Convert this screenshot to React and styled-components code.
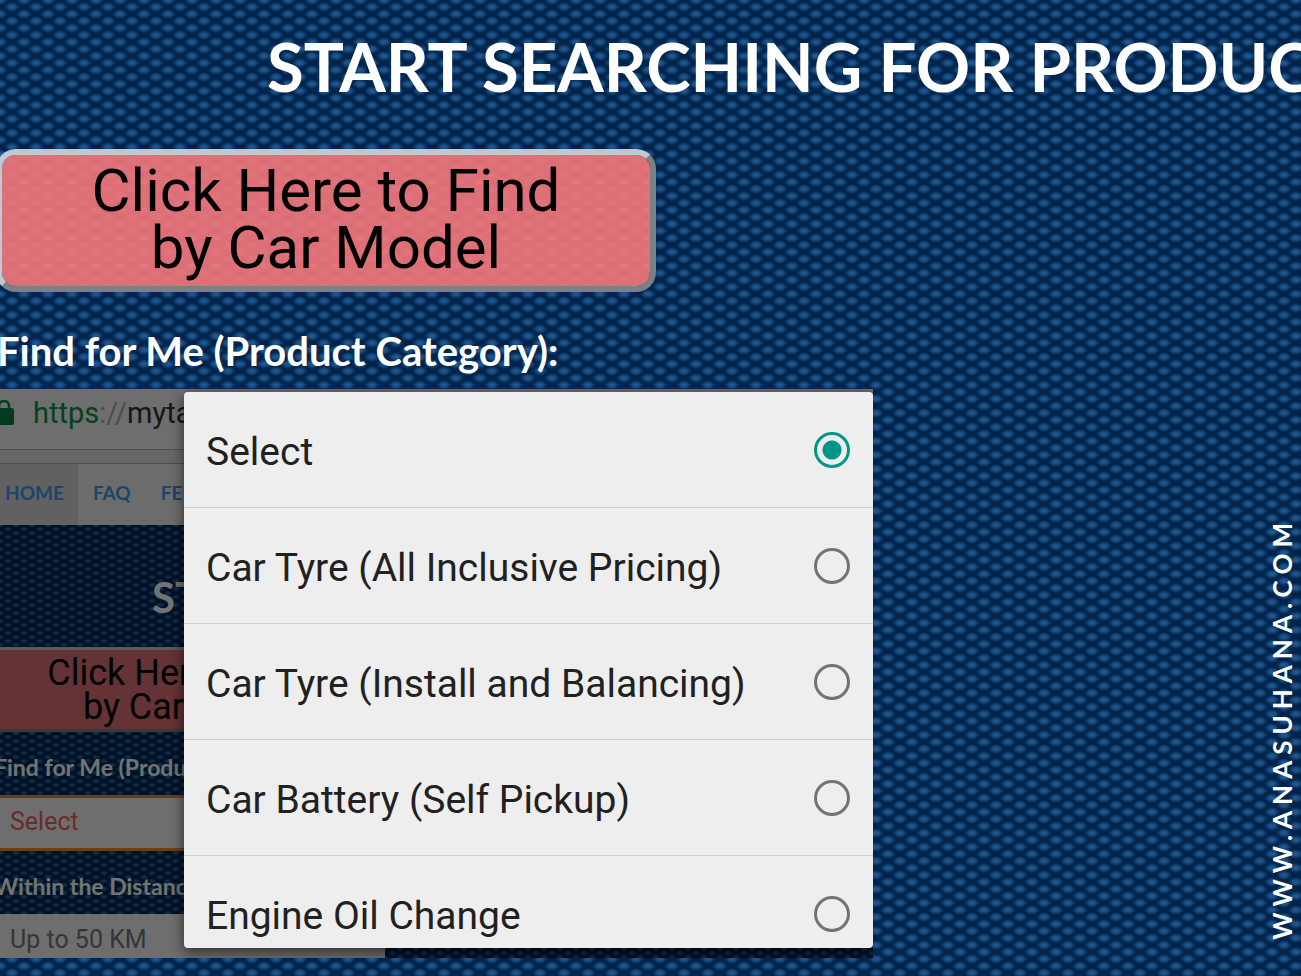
import styled, { createGlobalStyle, css } from 'styled-components';

const mesh = css`
  background-color: #02234a;
  --bump: radial-gradient(ellipse 8px 5px at 50% 50%, #225a90 0%, #1a4f85 40%, rgba(14, 66, 118, 0.75) 65%, transparent 100%);
  background-image: var(--bump), var(--bump);
`

const GlobalStyle = createGlobalStyle`
  *, *::before, *::after {
    box-sizing: border-box;
  }
  body {
    margin: 0;
    ${mesh}
    background-size: 24px 14px;
    background-position: 0 0, 12px 7px;
  }
`

const Page = styled.main`
  position: relative;
  overflow: hidden;
  padding: 20px 0 18px;
  color: #fff;
  font-family: Lato, sans-serif;
`

const Title = styled.h1`
  margin: 0;
  padding-left: ${({ $small }) => ($small ? '152px' : '267px')};
  font-size: ${({ $small }) => ($small ? '42px' : '67px')};
  line-height: ${({ $small }) => ($small ? '53px' : '92px')};
  font-weight: 700;
  white-space: nowrap;
`

const ModelButton = styled.button`
  display: block;
  width: ${({ $small }) => ($small ? '402px' : '660px')};
  margin: ${({ $small }) => ($small ? '23px 0 0 -13px' : '37px 0 0 -4px')};
  padding: ${({ $small }) => ($small ? '6px 0 5px' : '7px 0 10px')};
  border: ${({ $small }) => ($small ? '3px' : '6px')} solid;
  border-color: #c0c8d0 #7b8084 #7b8084 #c0c8d0;
  border-radius: ${({ $small }) => ($small ? '12px' : '20px')};
  background: rgba(248, 120, 123, 0.89);
  background-clip: padding-box;
  color: #000;
  font-family: Roboto, sans-serif;
  font-size: ${({ $small }) => ($small ? '36px' : '60px')};
  line-height: ${({ $small }) => ($small ? '34px' : '57px')};
`

const Label = styled.label`
  display: block;
  width: max-content;
  margin: 0 0 0 ${({ $small }) => ($small ? '-6px' : '-3px')};
  padding: ${({ $small }) => ($small ? '19px 0 11px' : '34px 0 13px')};
  font-size: ${({ $small }) => ($small ? '23px' : '40px')};
  line-height: ${({ $small }) => ($small ? '33px' : '50px')};
  font-weight: 700;
`

const Preview = styled.section`
  display: grid;
  width: calc(100% - 428px);
  height: 569px;
  overflow: hidden;

  > * {
    grid-area: 1 / 1;
  }
`

const Screen = styled.div`
  min-width: 0;
  ${mesh}
  --bump: radial-gradient(ellipse 5px 3px at 50% 50%, #2a6bab 0%, #1f5b98 40%, rgba(14, 70, 126, 0.75) 70%, transparent 100%);
  background-size: 16px 8px;
  background-position: 0 0, 8px 4px;
`

const AddressBar = styled.div`
  display: flex;
  gap: 19px;
  height: 61px;
  padding-bottom: 12px;
  align-items: center;
  border-bottom: 1px solid #b4b4b4;
  background: #f4f4f4;
  color: #333;
  font-family: Roboto, sans-serif;
  font-size: 29px;

  svg {
    margin-left: -6px;
  }
`

const Secure = styled.span`
  color: #0b9043;
`

const Slashes = styled.span`
  color: #aaa;
`

const Nav = styled.nav`
  display: flex;
  height: 75px;
  padding-top: 14px;
  background: linear-gradient(#e4e4e4 13px, #aaa 13px, #aaa 14px, #f0f0f0 14px);
`

const NavLink = styled.a`
  padding: 0 15px;
  background: ${({ $active }) => ($active ? '#d8d8d8' : 'transparent')};
  color: #4298ea;
  font-size: 19px;
  line-height: 58px;
  font-weight: 700;
  text-decoration: none;

  &:first-child {
    padding: 0 14px 0 5px;
  }
`

const ScreenBody = styled.div`
  padding-top: 46px;
`

const Field = styled.select`
  display: block;
  appearance: none;
  width: 391px;
  height: 56px;
  margin-left: -6px;
  padding: ${({ $error }) => ($error ? '0 13px 3px' : '0 16px 6px')};
  border: ${({ $error }) => ($error ? '3px solid #f08a30' : '0')};
  border-radius: 0;
  background: #f4f4f4;
  color: ${({ $error }) => ($error ? '#e9605c' : '#777')};
  font-family: Roboto, sans-serif;
  font-size: 25px;
`

const Scrim = styled.div`
  background: rgba(0, 0, 0, 0.55);
`

const OptionList = styled.div`
  z-index: 1;
  height: 556px;
  margin: 3px 0 0 184px;
  overflow: hidden;
  border-radius: 4px;
  background: #eee;
  box-shadow: 0 4px 14px rgba(0, 0, 0, 0.6);
`

const Option = styled.label`
  display: flex;
  align-items: center;
  justify-content: space-between;
  height: 116px;
  padding: 4px 23px 0 22px;
  border-bottom: 1px solid #d0d0d0;
  color: #212121;
  font-family: Roboto, sans-serif;
  font-size: 39px;
`

const Radio = styled.input`
  appearance: none;
  flex: none;
  width: 36px;
  height: 36px;
  margin: 0 0 4px;
  border: 3px solid #737373;
  border-radius: 50%;

  &:checked {
    border-color: #009688;
    background: radial-gradient(circle, #009688 9px, transparent 10px);
  }
`

const Watermark = styled.a`
  position: absolute;
  right: 4px;
  bottom: 36px;
  color: #fff;
  font-size: 26px;
  line-height: 30px;
  font-weight: 700;
  letter-spacing: 6px;
  text-decoration: none;
  writing-mode: vertical-rl;
  transform: rotate(180deg);
`

const options = [
  'Select',
  'Car Tyre (All Inclusive Pricing)',
  'Car Tyre (Install and Balancing)',
  'Car Battery (Self Pickup)',
  'Engine Oil Change',
]

function LockIcon() {
  return (
    <svg width="20" height="26" viewBox="0 0 20 26" fill="none" aria-hidden="true">
      <rect x="0" y="8" width="20" height="17" rx="2" fill="#0b8043" />
      <path d="M5 9V6a5 5 0 0 1 10 0V9" stroke="#0b8043" strokeWidth="2.500" />
    </svg>
  )
}

export default function App() {
  return (
    <Page>
      <GlobalStyle />
      <Title>START SEARCHING FOR PRODUCTS</Title>
      <ModelButton type="button">
        Click Here to Find<br />by Car Model
      </ModelButton>
      <Label as="h2">Find for Me (Product Category):</Label>

      <Preview>
        <Screen>
          <AddressBar>
            <LockIcon />
            <span><Secure>https</Secure><Slashes>://</Slashes>myta</span>
          </AddressBar>
          <Nav>
            <NavLink href="#home" $active>HOME</NavLink>
            <NavLink href="#faq">FAQ</NavLink>
            <NavLink href="#fe">FE</NavLink>
          </Nav>
          <ScreenBody>
            <Title as="h2" $small>ST</Title>
            <ModelButton type="button" $small>
              Click Here to Find<br />by Car Model
            </ModelButton>
            <Label htmlFor="category" $small>Find for Me (Produ</Label>
            <Field id="category" $error>
              <option>Select</option>
            </Field>
            <Label htmlFor="distance" $small>Within the Distanc</Label>
            <Field id="distance">
              <option>Up to 50 KM</option>
            </Field>
          </ScreenBody>
        </Screen>
        <Scrim />
        <OptionList role="radiogroup" aria-label="Product Category">
          {options.map((option, i) => (
            <Option key={option}>
              {option}
              <Radio type="radio" name="product" defaultChecked={i === 0} />
            </Option>
          ))}
        </OptionList>
      </Preview>

      <Watermark href="#site">WWW.ANASUHANA.COM</Watermark>
    </Page>
  )
}
